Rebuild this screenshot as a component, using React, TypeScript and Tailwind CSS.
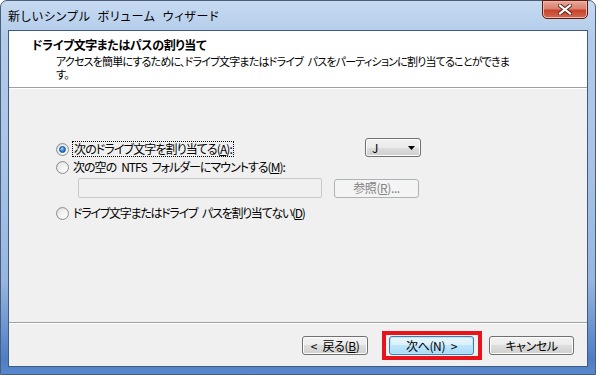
import React from "react";

function Radio({ checked }: { checked?: boolean }) {
  return (
    <span className="relative flex h-[13px] w-[13px] shrink-0 items-center justify-center rounded-full border border-[#8e8f8f] bg-gradient-to-br from-[#d4d4d4] to-[#fbfbfb]">
      <span className="flex h-[9px] w-[9px] items-center justify-center rounded-full bg-gradient-to-br from-[#e6e6e6] to-[#ffffff]">
        {checked && (
          <span className="h-[7px] w-[7px] rounded-full border border-[#1a4f8f] bg-[radial-gradient(circle_at_40%_35%,#a6dcff_0%,#3a8ee0_45%,#0f4f9c_100%)]" />
        )}
      </span>
    </span>
  );
}

function Btn({
  children,
  w,
  def,
}: {
  children: React.ReactNode;
  w: string;
  def?: boolean;
}) {
  return (
    <div
      className={
        "flex h-[19px] items-center justify-center rounded-[3px] border text-[12px] leading-none text-black " +
        w +
        " " +
        (def
          ? "border-[#3c7fb1] bg-[linear-gradient(#eaf6fd_0%,#d9f0fc_50%,#bee6fd_50%,#a7d9f5_100%)] shadow-[inset_0_0_0_1px_#bde3f6]"
          : "border-[#707070] bg-[linear-gradient(#f2f2f2_0%,#ebebeb_50%,#dddddd_50%,#cfcfcf_100%)] shadow-[inset_0_0_0_1px_#fcfcfc]")
      }
    >
      {children}
    </div>
  );
}

export default function App() {
  return (
    <div className="relative h-[375px] w-[596px] overflow-hidden bg-white font-['Noto_Sans_CJK_JP','Noto_Sans',sans-serif] [font-feature-settings:'palt']">
      <div className="flex h-[375px] w-[596px] flex-col rounded-t-[7px] border border-[#4a5e7c] bg-[linear-gradient(180deg,#c6daf1_0%,#b2cbea_10%,#a9c4e7_40%,#97b6e0_75%,#4e7dc5_96%,#5a88cb_100%)]">
        {/* title bar */}
        <div className="relative flex h-[29px] shrink-0 items-center pl-[7px]">
          <span className="text-[12px] leading-none tracking-[0.8px] text-black">
            新しいシンプル{"\u2002"}ボリューム{"\u2002"}ウィザード
          </span>
          <div className="absolute right-[7px] top-[-1px] flex h-[19px] w-[46px] items-center justify-center rounded-b-[5px] border border-[#5b1d12] bg-[linear-gradient(#e9a89a_0%,#d98270_45%,#c7432c_55%,#d4694f_100%)] shadow-[inset_0_0_0_1px_#f0b7a8]">
            <svg width="14" height="11" viewBox="0 0 14 11">
              <path d="M2 1.5 L12 9.5 M12 1.5 L2 9.5" stroke="#5a1f16" strokeWidth="4" strokeLinecap="square" />
              <path d="M2 1.5 L12 9.5 M12 1.5 L2 9.5" stroke="#ffffff" strokeWidth="2.2" strokeLinecap="square" />
            </svg>
          </div>
        </div>
        {/* client */}
        <div className="mx-[7px] flex flex-1 flex-col border border-[#3f5a80] bg-[#f0f0f0]">
          {/* header */}
          <div className="flex h-[57px] shrink-0 flex-col border-b border-[#a0a0a0] bg-white">
            <div className="pl-[23px] pt-[7px] text-[12px] font-bold leading-[14px] tracking-[-0.4px] text-black">
              ドライブ文字またはパスの割り当て
            </div>
            <div className="pl-[47px] pt-[3px] text-[11px] leading-[13px] tracking-[-0.8px] text-black whitespace-nowrap">
              <div>
                アクセスを簡単にするために、ドライブ文字またはドライブ{"\u2002"}パスをパーティションに割り当てることができま
              </div>
              <div>す。</div>
            </div>
          </div>
          <div className="h-px bg-white" />
          {/* body */}
          <div className="flex flex-1 flex-col pl-[47px]">
            <div className="mt-[49px] flex w-[365px] items-center justify-between">
              <div className="flex items-center pt-[3px]">
                <Radio checked />
                <span className="ml-[3px] border border-dotted border-black px-px text-[12px] leading-[14px] tracking-[-0.9px] text-black">
                  次のドライブ文字を割り当てる(<u>A</u>):
                </span>
              </div>
              <div className="flex h-[19px] w-[56px] items-center justify-between rounded-[3px] border border-[#707070] bg-[linear-gradient(#f2f2f2_0%,#ebebeb_50%,#dddddd_50%,#cfcfcf_100%)] pl-[6px] pr-[5px] shadow-[inset_0_0_0_1px_#fcfcfc]">
                <span className="text-[12px] leading-none text-black">J</span>
                <svg width="7" height="4" viewBox="0 0 7 4">
                  <path d="M0 0 H7 L3.5 4 Z" fill="#000" />
                </svg>
              </div>
            </div>
            <div className="mt-[3px] flex items-center">
              <Radio />
              <span className="ml-[4px] text-[12px] leading-[14px] tracking-[-1px] text-black">
                次の空の{"\u2002"}NTFS{"\u2002"}フォルダーにマウントする(<u>M</u>):
              </span>
            </div>
            <div className="mt-[4px] flex w-[363px] items-center justify-between pl-[22px]">
              <div className="h-[20px] w-[244px] rounded-[2px] border border-[#c7c9cc] bg-[#f0f0f0]" />
              <div className="flex h-[19px] w-[85px] items-center justify-center rounded-[3px] border border-[#adb2b5] bg-[#f4f4f4] text-[12px] leading-none tracking-[-0.4px] text-[#838383]">
                参照(<u>R</u>)...
              </div>
            </div>
            <div className="mt-[8px] flex items-center">
              <Radio />
              <span className="ml-[4px] text-[12px] leading-[14px] tracking-[-1.25px] text-black">
                ドライブ文字またはドライブ{"\u2002"}パスを割り当てない(<u>D</u>)
              </span>
            </div>
          </div>
          {/* footer */}
          <div className="h-px bg-[#a0a0a0]" />
          <div className="h-px bg-white" />
          <div className="flex h-[42px] shrink-0 items-start justify-end pr-[13px] pt-[12px]">
            <Btn w="w-[66px]">
              <span className="tracking-[-0.4px]">&lt;{"\u2002"}戻る(<u>B</u>)</span>
            </Btn>
            <div className="relative ml-[21px]">
              <Btn w="w-[85px]" def>
                <span className="tracking-[-0.4px]">次へ(N){"\u2002"}&gt;</span>
              </Btn>
              <div className="pointer-events-none absolute -bottom-[5px] -left-[7px] -right-[8px] -top-[5px] border-[4px] border-[#e8141c]" />
            </div>
            <div className="ml-[15px]">
              <Btn w="w-[85px]">
                <span className="tracking-[-0.4px]">キャンセル</span>
              </Btn>
            </div>
          </div>
        </div>
        <div className="h-[7px] shrink-0" />
      </div>
    </div>
  );
}
